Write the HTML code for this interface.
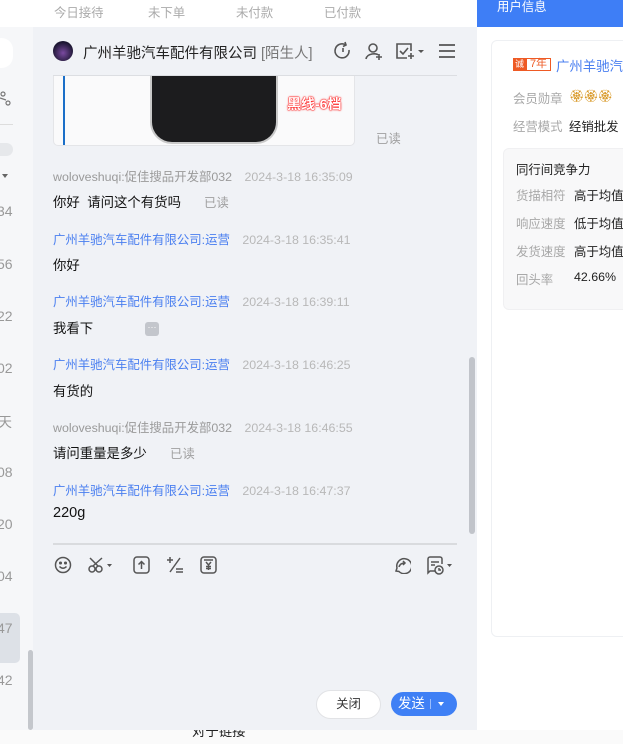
<!DOCTYPE html>
<html><head><meta charset="utf-8"><style>
*{margin:0;padding:0;box-sizing:border-box}
body{width:623px;height:744px;overflow:hidden;background:#fff;font-family:"Liberation Sans","Noto Sans CJK SC",sans-serif;position:relative}
.a{position:absolute;white-space:nowrap}
.meta{font-size:12.4px;color:#9a9a9a}
.blue{color:#4a7ff0}
.time{color:#b8b8b8;font-size:12.4px}
.msg{font-size:13.4px;color:#111}
.read{font-size:12.4px;color:#a0a0a0}
.gl{color:#a8a8a8;font-size:12.4px}
.v{color:#222;font-size:12.4px}
</style></head><body>
<div class="a" style="left:0;top:730px;width:623px;height:14px;background:#fafafa"></div>
<div class="a" style="left:192px;top:720px;font-size:13.4px;color:#222">对于链接</div>
<!-- top bar -->
<div class="a" style="left:0;top:0;width:477px;height:27px;background:#fff"></div>
<div class="a gl" style="left:54px;top:3px;color:#aaa">今日接待</div>
<div class="a gl" style="left:148px;top:3px;color:#aaa">未下单</div>
<div class="a gl" style="left:236px;top:3px;color:#aaa">未付款</div>
<div class="a gl" style="left:324px;top:3px;color:#aaa">已付款</div>
<!-- left strip -->
<div class="a" style="left:0;top:27px;width:33px;height:703px;background:#f6f7f9"></div>
<div class="a" style="left:-10px;top:38px;width:23px;height:30px;border-radius:14px;background:#fff"></div>
<div class="a" style="left:0;top:124px;width:13px;height:1px;background:#ddd"></div>
<div class="a" style="left:-6px;top:143px;width:19px;height:13px;border-radius:7px;background:#e6e8eb"></div>
<div class="a" style="left:2px;top:174px;width:0;height:0;border-left:3px solid transparent;border-right:3px solid transparent;border-top:4px solid #666"></div>
<svg class="a" style="left:0;top:90px" width="12" height="18"><circle cx="3" cy="4" r="2" fill="none" stroke="#777" stroke-width="1.2"/><circle cx="8" cy="13" r="2" fill="none" stroke="#777" stroke-width="1.2"/><path d="M0 8 L6 10" stroke="#777" stroke-width="1.2"/></svg>
<div class="a" style="left:0;top:613px;width:20px;height:50px;border-radius:0 5px 5px 0;background:#dde1e7"></div>
<div class="a" style="left:28px;top:650px;width:5px;height:80px;border-radius:3px;background:#c4c7cc"></div>
<div class="a" style="left:-3px;top:203px;font-size:14px;color:#999">34</div>
<div class="a" style="left:-3px;top:256px;font-size:14px;color:#999">56</div>
<div class="a" style="left:-3px;top:308px;font-size:14px;color:#999">22</div>
<div class="a" style="left:-3px;top:360px;font-size:14px;color:#999">02</div>
<div class="a" style="left:-2px;top:412px;font-size:14px;color:#999">天</div>
<div class="a" style="left:-3px;top:464px;font-size:14px;color:#999">08</div>
<div class="a" style="left:-3px;top:516px;font-size:14px;color:#999">20</div>
<div class="a" style="left:-3px;top:568px;font-size:14px;color:#999">04</div>
<div class="a" style="left:-3px;top:620px;font-size:14px;color:#999">47</div>
<div class="a" style="left:-3px;top:672px;font-size:14px;color:#999">42</div>
<!-- chat panel -->
<div class="a" style="left:33px;top:27px;width:444px;height:703px;background:#f0f2f6"></div>
<div class="a" style="left:53px;top:41px;width:20px;height:20px;border-radius:50%;background:radial-gradient(circle at 50% 60%,#7a4aa0,#1a1530 70%)"></div>
<div class="a" style="left:83px;top:42px;font-size:14.5px;color:#222">广州羊驰汽车配件有限公司 <span style="color:#777">[陌生人]</span></div>
<svg class="a" style="left:333px;top:41px" width="20" height="20" fill="none" stroke="#555" stroke-width="1.6"><path d="M16 9 A7 7 0 1 1 12 3.5"/><path d="M12 1 L13 4 L10 5.5"/><path d="M10 7 L10 11"/></svg>
<svg class="a" style="left:364px;top:41px" width="20" height="20" fill="none" stroke="#555" stroke-width="1.6"><circle cx="9" cy="7" r="4"/><path d="M2 18 C3 12 13 12 14 14"/><path d="M15 13 V19 M12 16 H18"/></svg>
<svg class="a" style="left:394px;top:41px" width="34" height="20" fill="none" stroke="#555" stroke-width="1.6"><path d="M13 17 H3 V3 H17 V10"/><path d="M6 10 L9 13 L14 7"/><path d="M17 12 V18 M14 15 H20"/><path d="M24 9 L30 9 L27 12 Z" fill="#555" stroke="none"/></svg>
<svg class="a" style="left:438px;top:42px" width="18" height="18" stroke="#555" stroke-width="1.8"><path d="M1 3H17M1 9H17M1 15H17"/></svg>
<div class="a" style="left:53px;top:75px;width:404px;height:1px;background:#dcdee2"></div>
<!-- image card -->
<div class="a" style="left:53px;top:76px;width:302px;height:70px;background:#fafafb;border-radius:0 0 5px 5px;border:1px solid #e4e5e8;border-top:none;overflow:hidden">
<div class="a" style="left:9px;top:0;width:2px;height:70px;background:#1b6fc8"></div>
<div class="a" style="left:96px;top:-10px;width:128px;height:78px;background:#1c1c1e;border-radius:0 0 22px 22px;border:2px solid #c9c9c9;border-top:none"></div>
<div class="a" style="left:233px;top:18px;font-size:14px;font-weight:bold;color:#fff;text-shadow:0 0 1px #f00,0 0 1px #f00,0 0 2px #f00">黑线-6档</div>
</div>
<div class="a read" style="left:376px;top:129px">已读</div>
<!-- messages -->
<div class="a meta" style="left:53px;top:167px">woloveshuqi:促佳搜品开发部032 <span class="time" style="margin-left:9px">2024-3-18 16:35:09</span></div>
<div class="a msg" style="left:53px;top:191px">你好&nbsp; 请问这个有货吗</div>
<div class="a read" style="left:204px;top:193px">已读</div>
<div class="a meta blue" style="left:53px;top:230px">广州羊驰汽车配件有限公司:运营 <span class="time" style="margin-left:9px">2024-3-18 16:35:41</span></div>
<div class="a msg" style="left:53px;top:254px">你好</div>
<div class="a meta blue" style="left:53px;top:292px">广州羊驰汽车配件有限公司:运营 <span class="time" style="margin-left:9px">2024-3-18 16:39:11</span></div>
<div class="a msg" style="left:53px;top:317px">我看下</div>
<div class="a" style="left:145px;top:322px;width:14px;height:14px;border-radius:3px;background:#c3c6cc;color:#fff;font-size:9px;text-align:center;line-height:10px">···</div>
<div class="a meta blue" style="left:53px;top:355px">广州羊驰汽车配件有限公司:运营 <span class="time" style="margin-left:9px">2024-3-18 16:46:25</span></div>
<div class="a msg" style="left:53px;top:380px">有货的</div>
<div class="a meta" style="left:53px;top:418px">woloveshuqi:促佳搜品开发部032 <span class="time" style="margin-left:9px">2024-3-18 16:46:55</span></div>
<div class="a msg" style="left:53px;top:442px">请问重量是多少</div>
<div class="a read" style="left:170px;top:444px">已读</div>
<div class="a meta blue" style="left:53px;top:481px">广州羊驰汽车配件有限公司:运营 <span class="time" style="margin-left:9px">2024-3-18 16:47:37</span></div>
<div class="a msg" style="left:53px;top:505px;font-size:14.5px">220g</div>
<div class="a" style="left:469px;top:357px;width:6px;height:177px;border-radius:3px;background:#c1c4ca"></div>
<div class="a" style="left:53px;top:543px;width:404px;height:2px;background:#d9dbde"></div>
<!-- toolbar -->
<svg class="a" style="left:54px;top:556px" width="18" height="18" fill="none" stroke="#555" stroke-width="1.5"><circle cx="9" cy="9" r="7.5"/><circle cx="6.5" cy="7" r=".8" fill="#555"/><circle cx="11.5" cy="7" r=".8" fill="#555"/><path d="M5.5 10.5 Q9 14 12.5 10.5"/></svg>
<svg class="a" style="left:88px;top:556px" width="28" height="18" fill="none" stroke="#555" stroke-width="1.5"><circle cx="4" cy="13" r="3"/><circle cx="11" cy="13" r="3"/><path d="M5 10 L14 2 M10 10 L2 2"/><path d="M19 8 L24 8 L21.5 11 Z" fill="#555" stroke="none"/></svg>
<svg class="a" style="left:133px;top:556px" width="18" height="18" fill="none" stroke="#555" stroke-width="1.5"><rect x="1" y="1" width="15" height="16" rx="3"/><path d="M8.5 13 V6 M5.5 8.5 L8.5 5.5 L11.5 8.5"/></svg>
<svg class="a" style="left:166px;top:556px" width="18" height="18" fill="none" stroke="#555" stroke-width="1.5"><path d="M1 4 H7 M4 1 V7 M4 16 L14 2 M10 13 H17 M10 16 H17"/></svg>
<svg class="a" style="left:200px;top:556px" width="18" height="18" fill="none" stroke="#555" stroke-width="1.5"><rect x="1" y="1" width="15" height="16" rx="3"/><path d="M4 4 H13 M6 6 L8.5 9 L11 6 M8.5 9 V14 M6 10.5 H11 M6 12.5 H11"/></svg>
<svg class="a" style="left:393px;top:556px" width="18" height="18" fill="none" stroke="#555" stroke-width="1.5"><path d="M3 15 L4 12 A7.5 7.5 0 1 1 6 15.5 Z"/><path d="M6 11 Q7 7 12 7 M10 5 L12 7 L10 9"/></svg>
<svg class="a" style="left:426px;top:556px" width="30" height="20" fill="none" stroke="#555" stroke-width="1.5"><path d="M9 15 H4 L2 17 V3 A2 2 0 0 1 4 1 H14 A2 2 0 0 1 16 3 V8"/><path d="M5 6 H13 M5 9 H9"/><circle cx="13" cy="14" r="4"/><path d="M13 12 V14 H15"/><path d="M21 8 L26 8 L23.5 11 Z" fill="#555" stroke="none"/></svg>
<!-- buttons -->
<div class="a" style="left:316px;top:690px;width:65px;height:29px;border-radius:15px;background:#fff;border:1px solid #e2e3e6;font-size:12.4px;color:#333;text-align:center;line-height:27px">关闭</div>
<div class="a" style="left:391px;top:692px;width:66px;height:24px;border-radius:12px;background:#3f80f5;color:#fff;font-size:13.4px;line-height:24px;padding-left:7px">发送<span style="position:absolute;left:39px;top:7px;width:1px;height:10px;background:#9bbdfb"></span><span style="position:absolute;left:47px;top:10px;width:0;height:0;border-left:3px solid transparent;border-right:3px solid transparent;border-top:4px solid #fff"></span></div>
<!-- right panel -->
<div class="a" style="left:477px;top:0;width:146px;height:27px;background:#3e7ef6"></div>
<div class="a" style="left:497px;top:0;font-size:12.4px;color:#fff;line-height:15px">用户信息</div>
<div class="a" style="left:477px;top:27px;width:146px;height:703px;background:#fff"></div>
<div class="a" style="left:491px;top:40px;width:140px;height:597px;border:1px solid #eef0f3;border-radius:6px;background:#fff"></div>
<div class="a" style="left:513px;top:58px;width:13px;height:13px;background:#ee5a24;color:#fff;font-size:9px;text-align:center;line-height:13px">诚</div>
<div class="a" style="left:526px;top:58px;width:25px;height:13px;border:1px solid #ee5a24;color:#ee5a24;font-size:11px;line-height:11px;text-align:center">7年</div>
<div class="a blue" style="left:556px;top:55px;font-size:13.4px">广州羊驰汽车</div>
<div class="a gl" style="left:513px;top:89px">会员勋章</div>
<div class="a" style="left:569px;top:89px;font-size:12px;color:#d99a2a;letter-spacing:-1px">🏵🏵🏵</div>
<div class="a gl" style="left:513px;top:117px">经营模式</div>
<div class="a v" style="left:569px;top:117px">经销批发</div>
<div class="a" style="left:503px;top:148px;width:130px;height:162px;border-radius:6px;background:#f8f8f9;border:1px solid #f0f0f2"></div>
<div class="a v" style="left:516px;top:160px">同行间竞争力</div>
<div class="a gl" style="left:516px;top:186px">货描相符</div><div class="a v" style="left:574px;top:186px">高于均值</div>
<div class="a gl" style="left:516px;top:214px">响应速度</div><div class="a v" style="left:574px;top:214px">低于均值</div>
<div class="a gl" style="left:516px;top:242px">发货速度</div><div class="a v" style="left:574px;top:242px">高于均值</div>
<div class="a gl" style="left:516px;top:270px">回头率</div><div class="a v" style="left:574px;top:270px">42.66%</div>
</body></html>
